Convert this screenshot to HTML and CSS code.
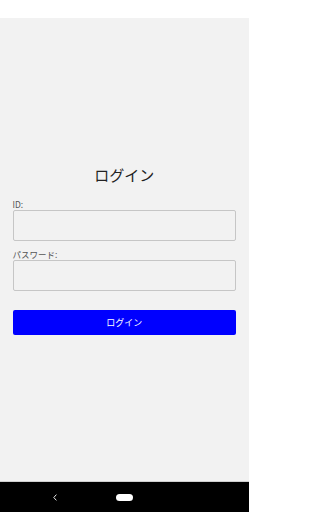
FILE: index.html
```html
<!DOCTYPE html>
<html lang="ja">
<head>
<meta charset="utf-8">
<title>ログイン</title>
<link rel="stylesheet" href="styles.css">
</head>
<body>
<div class="screen">
  <div class="status-bar"></div>
  <main class="main">
    <form class="login-form">
      <h1 class="title">ログイン</h1>
      <label class="label" for="uid">ID:</label>
      <input class="input" id="uid" type="text">
      <label class="label label-pw" for="pw">パスワード:</label>
      <input class="input" id="pw" type="password">
      <button class="button" type="button">ログイン</button>
    </form>
  </main>
  <nav class="nav-bar">
    <svg class="back" width="4" height="7" viewBox="0 0 4 7"><path d="M3.4 0.6 L0.8 3.5 L3.4 6.4" fill="none" stroke="#e6e6e6" stroke-width="1"/></svg>
    <span class="home"></span>
    <span></span>
  </nav>
</div>
</body>
</html>
```

FILE: styles.css
```css
html, body {
  margin: 0;
  padding: 0;
}
body {
  font-family: "Noto Sans CJK JP", "Roboto", "Noto Sans", sans-serif;
}
.screen {
  width: 249px;
  height: 512px;
  display: flex;
  flex-direction: column;
  background: #f2f2f2;
}
.status-bar {
  height: 18px;
  background: #ffffff;
  flex: none;
}
.main {
  flex: 1;
  background: #f2f2f2;
}
.login-form {
  display: flex;
  flex-direction: column;
  padding: 147px 13px 0 12.5px;
  margin: 0;
}
.title {
  margin: 0 0 14px 0;
  font-size: 15px;
  line-height: 20px;
  font-weight: 400;
  color: #222;
  text-align: center;
}
.label {
  font-size: 8.5px;
  line-height: 11px;
  height: 11px;
  color: #555;
}
.label-pw {
  margin-top: 8px;
}
.input {
  box-sizing: border-box;
  height: 31px;
  margin: 0;
  border: 1px solid #c6c6c6;
  border-radius: 2px;
  background: #f2f2f2;
  width: 100%;
}
.button {
  margin-top: 19px;
  height: 25px;
  border: none;
  border-radius: 2px;
  background: #0000ff;
  color: #ffffff;
  font-family: "Noto Sans CJK JP", "Roboto", sans-serif;
  font-size: 9px;
  padding: 0;
}
.nav-bar {
  flex: none;
  height: 30px;
  border-top: 1px solid #cfcfcf;
  background: #000;
  display: grid;
  grid-template-columns: 1fr auto 1fr;
  align-items: center;
}
.back {
  justify-self: end;
  margin-right: 59px;
}
.home {
  width: 17px;
  height: 7px;
  border-radius: 4px;
  background: #fff;
}
```
